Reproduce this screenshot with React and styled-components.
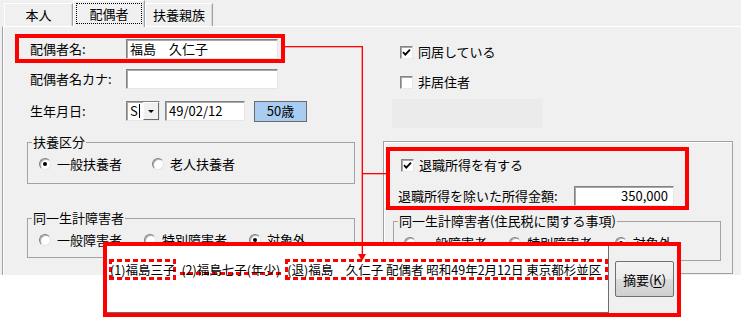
import React from "react";
import styled, { createGlobalStyle, css } from "styled-components";

const GlobalStyle = createGlobalStyle`
  html, body { margin: 0; padding: 0; background: #fff; }
  body {
    font-family: "Noto Sans CJK JP", "Noto Sans", sans-serif;
    font-size: 13px;
    color: #000;
  }
`;

// Page + window frame
const Screen = styled.div`
  position: relative;
  width: 741px;
  height: 320px;
  overflow: hidden;
  background: #fff;
`;

const Window = styled.div`
  height: 275px;
  background: #f0f0f0;
  display: flex;
  flex-direction: column;
`;

// Tabs
const TabStrip = styled.div`
  display: flex;
  align-items: flex-end;
  height: 26px;
  padding-left: 4px;
  position: relative;
  z-index: 1;
`;

const Tab = styled.div`
  box-sizing: border-box;
  width: ${({ w }) => w}px;
  height: ${({ active }) => (active ? 27 : 23)}px;
  margin-bottom: ${({ active }) => (active ? -1 : 0)}px;
  background: #f0f0f0;
  border-top: 1px solid #fff;
  border-left: 1px solid #fff;
  border-right: 1px solid #a0a0a0;
  box-shadow: inset -1px 0 0 #d8d8d8;
  display: flex;
  align-items: center;
  justify-content: center;
  line-height: 14px;
  padding: ${({ active }) => (active ? "2px 2px 3px 2px" : "0")};
`;

const FocusRect = styled.span`
  flex: 1;
  align-self: stretch;
  display: flex;
  align-items: center;
  justify-content: center;
  outline: 1px dotted #000;
  outline-offset: -1px;
`;

const TabPage = styled.div`
  flex: 1;
  display: flex;
  margin-left: 2px;
  border-top: 1px solid #fff;
  border-left: 1px solid #a0a0a0;
  box-shadow: inset 1px 0 0 #fff;
`;

// Columns
const LeftCol = styled.div`
  width: 380px;
  display: flex;
  flex-direction: column;
`;

const RightCol = styled.div`
  flex: 1;
  display: flex;
  flex-direction: column;
`;

// Form rows
const FieldRow = styled.div`
  box-sizing: border-box;
  display: flex;
  align-items: center;
  height: 20px;
  margin-top: ${({ mt }) => mt}px;
  padding-left: 27px;
`;

const MarkedRow = styled.div`
  box-sizing: border-box;
  display: flex;
  align-items: center;
  width: 270px;
  height: 29px;
  margin: 7px 0 0 12px;
  padding-left: 11px;
  border: 4px solid #ff0000;
`;

const Label = styled.span`
  width: ${({ w }) => w || 96}px;
  flex-shrink: 0;
  line-height: 14px;
  white-space: nowrap;
`;

const sunken = css`
  box-sizing: border-box;
  background: #fff;
  border: 1px solid;
  border-color: #828282 #e6e6e6 #e6e6e6 #828282;
  box-shadow: inset 1px 1px 0 #a8a8a8;
`;

const TextBox = styled.div`
  ${sunken};
  width: ${({ w }) => w}px;
  height: 20px;
  margin-left: ${({ ml }) => ml || 0}px;
  padding: 0 ${({ right }) => (right ? 5 : 3)}px;
  line-height: 18px;
  text-align: ${({ right }) => (right ? "right" : "left")};
  white-space: nowrap;
`;

const Era = styled.div`
  ${sunken};
  width: 34px;
  height: 20px;
  display: flex;
  align-items: center;
  padding-left: 3px;
  line-height: 18px;
`;

const Caret = styled.span`
  width: 1px;
  height: 14px;
  background: #000;
  margin-left: 1px;
`;

const DropButton = styled.span`
  box-sizing: border-box;
  margin-left: auto;
  width: 16px;
  height: 18px;
  background: #f0f0f0;
  border: 1px solid;
  border-color: #fff #696969 #696969 #fff;
  display: flex;
  align-items: center;
  justify-content: center;
  &::after {
    content: "";
    border-left: 3px solid transparent;
    border-right: 3px solid transparent;
    border-top: 3px solid #000;
  }
`;

const AgeBadge = styled.div`
  box-sizing: border-box;
  width: 53px;
  height: 21px;
  margin-left: 9px;
  background: #a9ccf1;
  border: 1px solid #6b6b6b;
  display: flex;
  align-items: center;
  justify-content: center;
  line-height: 14px;
`;

// Group boxes
const GroupBox = styled.fieldset`
  box-sizing: border-box;
  width: 328px;
  margin: ${({ mt }) => mt}px 0 0 ${({ ml }) => ml}px;
  padding: 0;
  border: 1px solid #a3a3a3;
  min-width: 0;
`;

const Legend = styled.legend`
  margin-left: 4px;
  padding: 0 1px;
  line-height: 14px;
`;

const RadioRow = styled.div`
  display: flex;
  align-items: center;
  height: 20px;
  margin: ${({ m }) => m};
  padding-left: ${({ pl }) => pl}px;
`;

const RadioItem = styled.label`
  display: flex;
  align-items: center;
  width: 113px;
  line-height: 14px;
  white-space: nowrap;
`;

const RadioDot = styled.span`
  box-sizing: border-box;
  position: relative;
  width: 12px;
  height: 12px;
  margin-right: 6px;
  border-radius: 50%;
  background: #fff;
  border: 1px solid;
  border-color: #7e7e7e #e4e4e4 #e4e4e4 #7e7e7e;
  box-shadow: inset 1px 1px 0 #b0b0b0;
  &::after {
    content: "";
    display: ${({ on }) => (on ? "block" : "none")};
    position: absolute;
    left: 3px;
    top: 3px;
    width: 4px;
    height: 4px;
    border-radius: 50%;
    background: #000;
  }
`;

// Checkboxes
const CheckRow = styled.label`
  display: flex;
  align-items: center;
  height: 14px;
  margin-top: ${({ mt }) => mt}px;
  padding-left: ${({ pl }) => pl}px;
  line-height: 14px;
`;

const CheckBox = styled.span`
  box-sizing: border-box;
  width: 13px;
  height: 13px;
  margin-right: 5px;
  background: #fff;
  border: 1px solid;
  border-color: #858585 #e8e8e8 #e8e8e8 #858585;
  box-shadow: inset 1px 1px 0 #a8a8a8;
  display: flex;
  align-items: center;
  justify-content: center;
`;

const Check = () => (
  <svg width="9" height="9" viewBox="0 0 9 9">
    <path d="M1 4.2 L3.3 6.6 L8 1.6" fill="none" stroke="#000" strokeWidth="1.8" />
  </svg>
);

const DisabledArea = styled.div`
  width: 150px;
  height: 29px;
  margin: 10px 0 0 9px;
  background: #ebebeb;
`;

const Panel = styled.div`
  box-sizing: border-box;
  width: 350px;
  height: 133px;
  margin-top: 13px;
  border: 1px solid #a0a0a0;
  box-shadow: inset 1px 1px 0 #fff;
  display: flex;
  flex-direction: column;
`;

const MarkedPanel = styled.div`
  box-sizing: border-box;
  width: 303px;
  height: 63px;
  margin: 5px 0 0 2px;
  border: 4px solid #ff0000;
  display: flex;
  flex-direction: column;
`;

const AmountRow = styled.div`
  display: flex;
  align-items: center;
  height: 20px;
  margin-top: 14px;
  padding-left: 8px;
`;

// Annotation overlay (callout + connector lines)
const Line = styled.div`
  position: absolute;
  left: ${({ x }) => x}px;
  top: ${({ y }) => y}px;
  width: ${({ w }) => w || 1}px;
  height: ${({ h }) => h || 1}px;
  background: #ff0000;
  box-shadow: ${({ h }) =>
    h ? "-1px 0 0 rgba(255,0,0,0.35)" : "0 1px 0 rgba(255,0,0,0.3)"};
  z-index: 3;
`;

const ArrowHead = styled.div`
  position: absolute;
  left: 358px;
  top: 254px;
  width: 0;
  height: 0;
  border-left: 4px solid transparent;
  border-right: 4px solid transparent;
  border-top: 7px solid #ff0000;
  z-index: 3;
`;

const Callout = styled.div`
  position: absolute;
  left: 103px;
  top: 242px;
  box-sizing: border-box;
  width: 578px;
  height: 75px;
  border: 4px solid #ff0000;
  background: #f0f0f0;
  display: flex;
  z-index: 2;
`;

const MemoArea = styled.div`
  box-sizing: border-box;
  width: 502px;
  height: 67px;
  background: #fff;
  border-right: 1px solid #6d6d6d;
  border-bottom: 1px solid #6d6d6d;
  overflow: hidden;
  padding: 13px 0 0 2px;
  font-size: 12.5px;
`;

const MemoLine = styled.div`
  display: flex;
  align-items: center;
  gap: 4px;
  height: 21px;
  white-space: nowrap;
`;

const dash = (dir) =>
  `repeating-linear-gradient(${dir}, #ff0000 0 5px, transparent 5px 8px)`;

const DashBox = styled.span`
  box-sizing: border-box;
  display: flex;
  align-items: center;
  height: 21px;
  padding: 0 ${({ pad }) => pad || 1}px;
  line-height: 14px;
  overflow: hidden;
  flex: ${({ grow }) => (grow ? "1 1 0" : "0 0 auto")};
  min-width: 0;
  background: ${({ underline }) =>
    underline
      ? `${dash("90deg")} left 0 bottom 5px / 100% 3px no-repeat`
      : `${dash("90deg")} left top / 100% 3px no-repeat,
         ${dash("90deg")} left bottom / 100% 3px no-repeat,
         ${dash("180deg")} left top / 3px 100% no-repeat,
         ${dash("180deg")} right top / 3px 100% no-repeat`};
`;

const MemoButton = styled.button`
  box-sizing: border-box;
  width: 59px;
  height: 36px;
  margin: 15px 0 0 6px;
  padding: 0;
  font: inherit;
  font-size: 13px;
  color: #000;
  border: 1px solid #707070;
  border-radius: 2px;
  background: linear-gradient(#f3f3f3, #ebebeb 50%, #dddddd 51%, #cfcfcf);
  u { text-decoration-thickness: 1px; text-underline-offset: 2px; }
`;

export default function App() {
  return (
    <Screen>
      <GlobalStyle />
      <Window>
        <TabStrip>
          <Tab w={69}>本人</Tab>
          <Tab w={72} active>
            <FocusRect>配偶者</FocusRect>
          </Tab>
          <Tab w={68}>扶養親族</Tab>
        </TabStrip>

        <TabPage>
          <LeftCol>
            <MarkedRow>
              <Label>配偶者名:</Label>
              <TextBox w={152}>福島　久仁子</TextBox>
            </MarkedRow>
            <FieldRow mt={6}>
              <Label>配偶者名カナ:</Label>
              <TextBox w={152} />
            </FieldRow>
            <FieldRow mt={12}>
              <Label>生年月日:</Label>
              <Era>
                S<Caret />
                <DropButton />
              </Era>
              <TextBox w={80} ml={5}>49/02/12</TextBox>
              <AgeBadge>50歳</AgeBadge>
            </FieldRow>

            <GroupBox mt={14} ml={24}>
              <Legend>扶養区分</Legend>
              <RadioRow m="5px 0 9px" pl={11}>
                <RadioItem>
                  <RadioDot on />
                  一般扶養者
                </RadioItem>
                <RadioItem>
                  <RadioDot />
                  老人扶養者
                </RadioItem>
              </RadioRow>
            </GroupBox>

            <GroupBox mt={27} ml={24}>
              <Legend>同一生計障害者</Legend>
              <RadioRow m="5px 0 7px" pl={11}>
                <RadioItem>
                  <RadioDot />
                  一般障害者
                </RadioItem>
                <RadioItem>
                  <RadioDot />
                  特別障害者
                </RadioItem>
                <RadioItem>
                  <RadioDot on />
                  対象外
                </RadioItem>
              </RadioRow>
            </GroupBox>
          </LeftCol>

          <RightCol>
            <CheckRow mt={18} pl={17}>
              <CheckBox>
                <Check />
              </CheckBox>
              同居している
            </CheckRow>
            <CheckRow mt={16} pl={17}>
              <CheckBox />
              非居住者
            </CheckRow>
            <DisabledArea />

            <Panel>
              <MarkedPanel>
                <CheckRow mt={7} pl={11}>
                  <CheckBox>
                    <Check />
                  </CheckBox>
                  退職所得を有する
                </CheckRow>
                <AmountRow>
                  <Label w={176}>退職所得を除いた所得金額:</Label>
                  <TextBox w={100} right>
                    350,000
                  </TextBox>
                </AmountRow>
              </MarkedPanel>

              <GroupBox mt={4} ml={9}>
                <Legend>同一生計障害者(住民税に関する事項)</Legend>
                <RadioRow m="5px 0 7px" pl={10}>
                  <RadioItem>
                    <RadioDot />
                    一般障害者
                  </RadioItem>
                  <RadioItem>
                    <RadioDot />
                    特別障害者
                  </RadioItem>
                  <RadioItem>
                    <RadioDot on />
                    対象外
                  </RadioItem>
                </RadioRow>
              </GroupBox>
            </Panel>
          </RightCol>
        </TabPage>
      </Window>

      <Line x={285} y={46} w={77} />
      <Line x={362} y={46} h={210} />
      <Line x={362} y={173} w={25} />
      <ArrowHead />

      <Callout>
        <MemoArea>
          <MemoLine>
            <DashBox>(1)福島三子</DashBox>
            <DashBox underline>(2)福島七子(年少)</DashBox>
            <DashBox grow pad={2}>
              (退)福島　久仁子 配偶者 昭和49年2月12日 東京都杉並区
            </DashBox>
          </MemoLine>
        </MemoArea>
        <MemoButton>
          摘要(<u>K</u>)
        </MemoButton>
      </Callout>
    </Screen>
  );
}
